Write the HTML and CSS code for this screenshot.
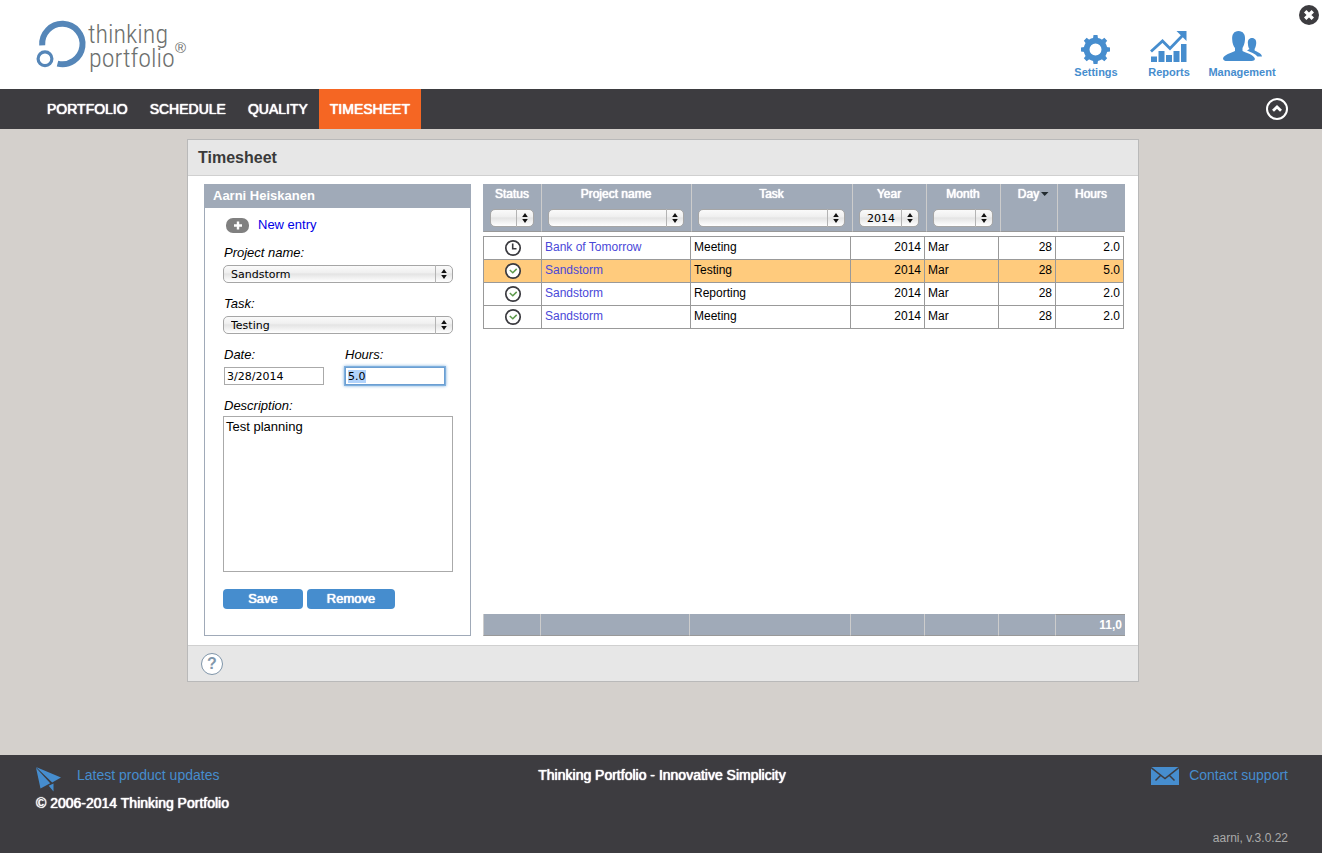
FILE: index.html
```
<!DOCTYPE html>
<html lang="en">
<head>
<meta charset="utf-8">
<title>Thinking Portfolio - Timesheet</title>
<link rel="stylesheet" href="styles.css">
</head>
<body>
<svg class="defs" aria-hidden="true">
  <symbol id="updown" viewBox="0 0 18 18">
    <path d="M.5 0V18" stroke="#b4b4b4"/>
    <path d="M9 4L11.800 8H6.200ZM9 14L6.200 10H11.800Z" fill="#111"/>
  </symbol>
  <symbol id="clock" viewBox="0 0 18 18">
    <circle cx="9" cy="9" r="7.2" fill="#fff" stroke="#3a3a3f" stroke-width="1.7"/>
    <path d="M8.7 4.5V9.7H12.5" fill="none" stroke="#3a3a3f" stroke-width="1.6"/>
  </symbol>
  <symbol id="check" viewBox="0 0 18 18">
    <circle cx="9" cy="9" r="7.2" fill="#fff" stroke="#3a3a3f" stroke-width="1.7"/>
    <path d="M5.8 8L8.8 10.8L12.7 6.9" fill="none" stroke="#5d9a4b" stroke-width="1.5"/>
  </symbol>
</svg>

<header class="top">
  <a class="logo" href="#" aria-label="Thinking Portfolio">
    <svg width="152" height="58" viewBox="36 18 152 58">
      <g fill="none" stroke="#5586b8">
        <path d="M42.200 45.400A20.200 20.200 0 1 1 57.500 63.600" stroke-width="6"/>
        <circle cx="45" cy="58.7" r="6.9" stroke-width="3.200"/>
      </g>
      <g class="logo-text">
        <text x="88" y="43">thinking</text>
        <text x="89" y="67">portfolio</text>
        <text class="logo-mark" x="175" y="53">®</text>
      </g>
    </svg>
  </a>
  <nav class="tools" aria-label="Tools">
    <a class="tool" href="#">
      <svg width="40" height="34" viewBox="0 0 40 34">
        <g transform="translate(19.500 18.500)" fill="#468dce">
          <path fill-rule="evenodd" d="M0-11.8A11.8 11.8 0 1 1 0 11.8A11.8 11.8 0 1 1 0-11.8ZM0-6A6 6 0 1 0 0 6A6 6 0 1 0 0-6Z"/>
          <g id="teeth">
            <path d="M-2.5-11L-2-14.5H2L2.5-11ZM-2.5 11L-2 14.5H2L2.5 11ZM-11-2.5L-14.5-2V2L-11 2.5ZM11-2.5L14.5-2V2L11 2.5Z"/>
          </g>
          <use href="#teeth" transform="rotate(45)"/>
        </g>
      </svg>
      Settings
    </a>
    <a class="tool" href="#">
      <svg width="40" height="34" viewBox="0 0 40 34">
        <path d="M2 25.500H8V31H2ZM9.500 20H15.500V31H9.500ZM17 24H23V31H17ZM24.500 20H30.500V31H24.500ZM32 13H37.500V31H32Z" fill="#468dce"/>
        <path d="M2 20.500L13.500 10L21 17.500L34 4" fill="none" stroke="#468dce" stroke-width="2.8"/>
        <path d="M27.500 0H37.500V10Z" fill="#468dce"/>
      </svg>
      Reports
    </a>
    <a class="tool" href="#">
      <svg width="40" height="34" viewBox="0 0 40 34">
        <path d="M16.500 0C21 0 23.500 3.500 23 8.500C22.700 13 21.500 15 20.500 17V20C24 22 32 23.500 33 28C32.500 30 30 30 28 30H5C3 30 1.200 29.500 1 27.500C2 23.500 9 22 13 20V17C11.500 15 10.300 12.500 10.200 8.500C9.800 3.500 12 0 16.500 0Z" fill="#468dce"/>
        <path d="M30 7C33 7 34.500 9.300 34.200 12.500C34 15 33.300 16.600 32.600 18V19.500C35 21 39.500 22 40 25.500H35.500C33 22.500 28.500 21 25 19.500L27.500 18C26.500 16.600 26 15 25.900 12.500C25.600 9.300 27 7 30 7Z" fill="#468dce"/>
      </svg>
      Management
    </a>
  </nav>
  <button class="close" type="button" aria-label="Close">
    <svg width="20" height="20" viewBox="0 0 20 20"><circle cx="10" cy="10" r="10" fill="#3d3c40"/><path d="M6.200 6.200L13.800 13.800M13.800 6.200L6.200 13.800" stroke="#fff" stroke-width="3.400"/></svg>
  </button>
</header>

<nav class="menu" aria-label="Main">
  <a class="menu-item" href="#">PORTFOLIO</a>
  <a class="menu-item" href="#">SCHEDULE</a>
  <a class="menu-item" href="#">QUALITY</a>
  <a class="menu-item menu-item-active" href="#" aria-current="page">TIMESHEET</a>
  <button class="collapse" type="button" aria-label="Collapse header">
    <svg width="24" height="24" viewBox="0 0 24 24" fill="none" stroke="#fff"><circle cx="12" cy="12" r="10" stroke-width="2"/><path d="M8 13.800L12 10L16 13.800" stroke-width="2.800"/></svg>
  </button>
</nav>

<main class="page">
  <section class="panel">
    <h1 class="panel-title">Timesheet</h1>
    <div class="panel-body">
      <form class="entry">
        <h2 class="entry-title">Aarni Heiskanen</h2>
        <div class="entry-fields">
          <a class="new-entry" href="#">
            <svg width="23" height="15" viewBox="0 0 23 15"><rect width="23" height="15" rx="7" fill="#808080"/><path d="M12 3.500V11.500M8 7.500H16" stroke="#fff" stroke-width="2.400"/></svg>
            New entry
          </a>
          <div class="field">
            <label for="project">Project name:</label>
            <span class="pick"><select id="project"><option>Sandstorm</option><option>Bank of Tomorrow</option></select><svg><use href="#updown"/></svg></span>
          </div>
          <div class="field">
            <label for="task">Task:</label>
            <span class="pick"><select id="task"><option>Testing</option><option>Meeting</option><option>Reporting</option></select><svg><use href="#updown"/></svg></span>
          </div>
          <div class="field-pair">
            <div class="field"><label for="date">Date:</label><input class="text" id="date" type="text" value="3/28/2014"></div>
            <div class="field"><label for="hours">Hours:</label><input class="text" id="hours" type="text" value="5.0" autofocus></div>
          </div>
          <div class="field field-description">
            <label for="description">Description:</label>
            <textarea class="description" id="description">Test planning</textarea>
          </div>
          <div class="actions">
            <button class="action" type="button">Save</button>
            <button class="action action-wide" type="button">Remove</button>
          </div>
        </div>
      </form>

      <div class="sheet">
        <table class="grid grid-head">
          <colgroup><col class="c-status"><col class="c-project-head"><col><col class="c-date"><col class="c-date"><col class="c-day"><col class="c-hours"></colgroup>
          <thead>
            <tr>
              <th>Status<span class="pick"><select aria-label="Status"><option></option></select><svg><use href="#updown"/></svg></span></th>
              <th>Project name<span class="pick"><select aria-label="Project name"><option></option></select><svg><use href="#updown"/></svg></span></th>
              <th>Task<span class="pick"><select aria-label="Task"><option></option></select><svg><use href="#updown"/></svg></span></th>
              <th>Year<span class="pick"><select aria-label="Year"><option>2014</option></select><svg><use href="#updown"/></svg></span></th>
              <th>Month<span class="pick"><select aria-label="Month"><option></option></select><svg><use href="#updown"/></svg></span></th>
              <th class="sorted">Day<svg width="10" height="8" viewBox="0 0 10 8"><path d="M2 2H9.500L5.700 6Z" fill="#222b30"/></svg></th>
              <th>Hours</th>
            </tr>
          </thead>
        </table>
        <table class="grid grid-rows">
          <colgroup><col class="c-status"><col class="c-project"><col><col class="c-date"><col class="c-date"><col class="c-day"><col class="c-hours"></colgroup>
          <tbody>
            <tr><td><svg class="status"><use href="#clock"/></svg></td><td><a href="#">Bank of Tomorrow</a></td><td>Meeting</td><td class="num">2014</td><td>Mar</td><td class="num">28</td><td class="num">2.0</td></tr>
            <tr class="selected"><td><svg class="status"><use href="#check"/></svg></td><td><a href="#">Sandstorm</a></td><td>Testing</td><td class="num">2014</td><td>Mar</td><td class="num">28</td><td class="num">5.0</td></tr>
            <tr><td><svg class="status"><use href="#check"/></svg></td><td><a href="#">Sandstorm</a></td><td>Reporting</td><td class="num">2014</td><td>Mar</td><td class="num">28</td><td class="num">2.0</td></tr>
            <tr><td><svg class="status"><use href="#check"/></svg></td><td><a href="#">Sandstorm</a></td><td>Meeting</td><td class="num">2014</td><td>Mar</td><td class="num">28</td><td class="num">2.0</td></tr>
          </tbody>
        </table>
        <table class="grid grid-total">
          <colgroup><col class="c-status-total"><col class="c-project"><col><col class="c-date"><col class="c-date"><col class="c-day"><col class="c-total"></colgroup>
          <tbody><tr><td></td><td></td><td></td><td></td><td></td><td></td><td class="total">11,0</td></tr></tbody>
        </table>
      </div>
    </div>
    <div class="panel-foot">
      <button class="help" type="button" aria-label="Help">?</button>
    </div>
  </section>
</main>

<footer class="foot">
  <div class="foot-left">
    <a class="foot-link foot-news" href="#">
      <svg width="25" height="25" viewBox="0 0 25 25" fill="#468dce"><path d="M0 0L25 10.500L16.200 15.500ZM0 .8L14.200 16.300L4.500 21.500ZM17.500 16.500V24.500L12.700 18.700Z"/></svg>
      Latest product updates
    </a>
    <span>© 2006-2014 Thinking Portfolio</span>
  </div>
  <div class="foot-center">Thinking Portfolio - Innovative Simplicity</div>
  <div class="foot-right">
    <a class="foot-link foot-contact" href="#">
      <svg width="28" height="18" viewBox="0 0 28 18"><path d="M0 0H28V18H0Z" fill="#468dce"/><path d="M0 .5L14 11.500L28 .5M4.500 13.500L9.500 8.500M23.500 13.500L18.500 8.500" fill="none" stroke="#3d3c40" stroke-width="1.500"/></svg>
      Contact support
    </a>
    <span class="version">aarni, v.3.0.22</span>
  </div>
</footer>
<script src="main.js"></script>
</body>
</html>
```
FILE: styles.css
```
* { box-sizing: border-box; }

body {
  margin: 0;
  min-height: 100vh;
  display: flex;
  flex-direction: column;
  background: #d4d0cc;
  color: #000;
  font: 13px/16px "Liberation Sans", Arial, sans-serif;
}

a { text-decoration: none; }
button { border: 0; padding: 0; background: none; font: inherit; cursor: pointer; }
h1, h2 { margin: 0; }
svg { display: block; }
.defs { position: absolute; width: 0; height: 0; }

/* Header */
.top {
  position: relative;
  display: flex;
  justify-content: space-between;
  align-items: flex-start;
  min-height: 89px;
  padding: 18px 46px 0 36px;
  background: #fff;
}
.logo-text { fill: #6d706e; font: 300 26px "Liberation Sans Narrow", "Roboto Condensed", "Liberation Sans", sans-serif; }
.logo-mark { font: 15px "Liberation Sans", sans-serif; }
.tools { display: flex; gap: 5px; padding-top: 13px; }
.tool {
  display: flex;
  flex-direction: column;
  align-items: center;
  gap: 1px;
  min-width: 68px;
  color: #468dce;
  font: bold 11px/13px "Liberation Sans", Arial, sans-serif;
}
.close { position: absolute; top: 5px; right: 3px; }

/* Main menu */
.menu {
  display: flex;
  align-items: stretch;
  min-height: 40px;
  padding: 0 33px 0 36px;
  background: #3d3c40;
}
.menu-item {
  padding: 0 11px;
  color: #fff;
  font-size: 14px;
  line-height: 40px;
  text-shadow: 0 0 1px currentColor, 0 0 1px currentColor;
}
.menu-item-active { background: #f56623; }
.collapse { margin-left: auto; }

/* Panel */
.page { flex: 1; padding: 10px 0 10px 4px; }
.panel {
  max-width: 952px;
  margin: 0 auto;
  background: #fff;
  border: 1px solid #b9b9b9;
}
.panel-title {
  padding: 0 10px;
  background: #e7e7e7;
  border-bottom: 1px solid #d0d0d0;
  color: #3a3a3a;
  font-size: 16px;
  line-height: 35px;
}
.panel-body { display: flex; gap: 12px; padding: 8px 13px 9px 16px; }
.panel-foot {
  padding: 7px 13px 6px;
  background: #e7e7e7;
  border-top: 1px solid #d0d0d0;
}
.help {
  display: block;
  width: 22px;
  height: 22px;
  border: 1px solid #7f95a9;
  border-radius: 50%;
  background: #fff;
  color: #8197ab;
  font-weight: bold;
  font-size: 16px;
  line-height: 20px;
}

/* Entry form */
.entry { flex: 0 0 267px; border: 1px solid #a0aab8; border-top: 0; }
.entry-title {
  padding: 0 8px;
  background: #a0aab8;
  color: #fff;
  font-size: 13px;
  line-height: 24px;
}
.entry-fields {
  display: flex;
  flex-direction: column;
  gap: 13px;
  padding: 10px 17px 26px 18px;
}
.new-entry {
  display: flex;
  align-items: center;
  gap: 9px;
  height: 14px;
  padding-left: 3px;
  color: #0000e6;
}
.field { display: flex; flex-direction: column; gap: 4px; min-width: 0; }
.field label { padding-left: 1px; font-style: italic; }
.field-pair { display: grid; grid-template-columns: 100px 100px; gap: 21px; padding-left: 1px; }
.field-pair label { padding-left: 0; }
.field-description { gap: 2px; }
.text {
  width: 100%;
  height: 18px;
  padding: 0 2px;
  border: 1px solid #aaa;
  font: 11px "DejaVu Sans", sans-serif;
}
.text:focus {
  outline: none;
  border-color: #6c9fd2;
  box-shadow: 0 0 0 1px #7fb0de, 0 0 3px 1px #7fb0de;
}
.text::selection { background: #b1d3fb; color: #000; }
.description {
  display: block;
  height: 156px;
  padding: 2px;
  border: 1px solid #aaa;
  resize: none;
  font: 13px/16px "Liberation Sans", Arial, sans-serif;
}
.actions { display: flex; gap: 4px; padding-top: 4px; }
.action {
  width: 80px;
  height: 20px;
  border-radius: 4px;
  background: #468dce;
  color: #fff;
  text-shadow: 0 0 1px currentColor, 0 0 1px currentColor;
}
.action-wide { width: 88px; }

/* Drop-downs with an up/down marker */
.pick { display: grid; align-items: center; }
.pick select, .pick svg { grid-area: 1 / 1; }
.pick select {
  appearance: none;
  width: 100%;
  height: 18px;
  padding: 0 18px 0 7px;
  border: 1px solid #a6a6a6;
  border-radius: 5px;
  background: linear-gradient(#fafafa, #f0f0f0 40%, #e4e4e4 50%, #fff);
  color: #000;
  font: 11px "DejaVu Sans", sans-serif;
}
.pick svg { justify-self: end; width: 18px; height: 18px; pointer-events: none; }

/* Timesheet grid */
.sheet { flex: 1; display: flex; flex-direction: column; min-width: 0; }
.grid { width: 100%; table-layout: fixed; border-collapse: collapse; font-size: 12px; }
.c-status { width: 58px; }
.c-status-total { width: 57px; }
.c-project { width: 149px; }
.c-project-head { width: 150px; }
.c-date { width: 74px; }
.c-day { width: 57px; }
.c-hours { width: 68px; }
.c-total { width: 70px; }

.grid-head { border-collapse: separate; border-spacing: 0; }
.grid-head th {
  height: 48px;
  padding: 2px 7px 0 6px;
  vertical-align: top;
  background: #a0aab8;
  border-left: 1px solid #ccc;
  border-bottom: 1px solid #999;
  color: #fff;
  font-weight: normal;
  text-shadow: 0 0 1px currentColor, 0 0 1px currentColor;
}
.grid-head th:first-child { border-left-color: #a0aab8; }
.grid-head .pick { margin-top: 7px; text-shadow: none; }
.grid-head th.sorted { padding-left: 16px; white-space: nowrap; }
.sorted svg { display: inline-block; }

.grid-rows { width: calc(100% - 1px); margin-top: 4px; }
.grid-rows td { height: 23px; padding: 0 3px 2px; border: 1px solid #999; }
.grid-rows a { color: #4a48d8; }
.grid-rows .status { width: 18px; height: 18px; margin: 0 auto; }
.grid-rows td:first-child { padding: 0; }
.grid .num { text-align: right; }
.selected { background: #ffcb7d; }

.grid-total { margin-top: auto; border-collapse: separate; border-spacing: 0; }
.grid-total td {
  height: 22px;
  padding: 0 3px 0 0;
  background: #a0aab8;
  border-left: 1px solid #ccc;
  border-bottom: 1px solid #999;
}
.grid-total td.total {
  border-top: 1px solid #999;
  color: #fff;
  font-weight: bold;
  text-align: right;
}

/* Footer */
.foot {
  display: grid;
  grid-template-columns: 1fr auto 1fr;
  min-height: 98px;
  padding: 12px 34px 7px 36px;
  background: #3d3c40;
  color: #fff;
  font-size: 14px;
  text-shadow: 0 0 1px currentColor, 0 0 1px currentColor;
}
.foot-left { display: flex; flex-direction: column; gap: 3px; align-items: flex-start; }
.foot-right { display: flex; flex-direction: column; justify-content: space-between; align-items: flex-end; }
.foot-link { display: flex; color: #468dce; text-shadow: none; }
.foot-news { gap: 16px; }
.foot-contact { gap: 10px; }
.version { color: #aaa; font-size: 12px; text-shadow: none; }
```
FILE: main.js
```
const hours = document.getElementById("hours");
hours.focus();
hours.select();
```
